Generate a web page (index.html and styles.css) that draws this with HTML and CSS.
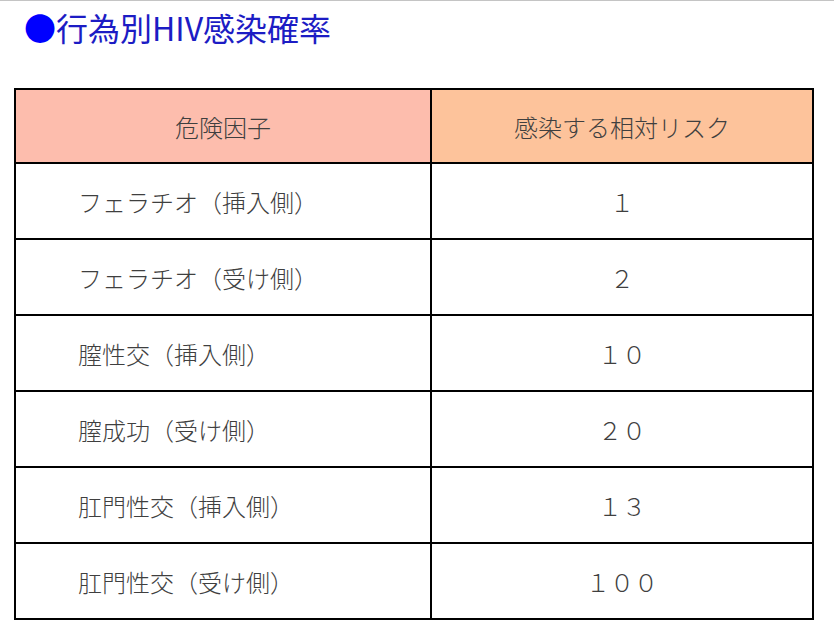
FILE: index.html
```html
<!DOCTYPE html>
<html lang="ja">
<head>
<meta charset="utf-8">
<link rel="stylesheet" href="styles.css">
</head>
<body>
<div class="page">
  <h2 class="title"><span class="dot">●</span>行為別HIV感染確率</h2>
  <table class="risk">
    <thead>
      <tr>
        <th class="h1">危険因子</th>
        <th class="h2">感染する相対リスク</th>
      </tr>
    </thead>
    <tbody>
      <tr><td class="factor">フェラチオ（挿入側）</td><td class="val">１</td></tr>
      <tr><td class="factor">フェラチオ（受け側）</td><td class="val">２</td></tr>
      <tr><td class="factor">膣性交（挿入側）</td><td class="val">１０</td></tr>
      <tr><td class="factor">膣成功（受け側）</td><td class="val">２０</td></tr>
      <tr><td class="factor">肛門性交（挿入側）</td><td class="val">１３</td></tr>
      <tr><td class="factor">肛門性交（受け側）</td><td class="val">１００</td></tr>
    </tbody>
  </table>
</div>
</body>
</html>
```

FILE: styles.css
```css
html, body {
  margin: 0;
  padding: 0;
  background: #ffffff;
}
.page {
  border-top: 1px solid #c4c4c4;
  font-family: "Noto Sans CJK JP", "Noto Sans", sans-serif;
  padding: 0 0 0 14px;
}
.title {
  margin: 0;
  padding: 6px 0 0 10px;
  height: 80px;
  box-sizing: border-box;
  font-size: 32px;
  font-weight: normal;
  line-height: 40px;
  color: #1c1cc4;
}
.dot {
  color: #0000ff;
}
.risk {
  border-collapse: collapse;
  width: 800px;
  margin-top: 7px;
  table-layout: fixed;
  font-size: 24px;
  font-weight: 300;
  color: #3f3f3f;
}
.risk th, .risk td {
  border: 2px solid #000000;
  height: 74px;
  padding: 0;
  font-weight: 300;
}
.risk th {
  text-align: center;
  height: 72px;
}
.h1 {
  width: 414px;
  background: #fdbdad;
}
.h2 {
  background: #fdc39b;
}
.factor {
  text-align: left;
  padding-left: 62px !important;
}
.val {
  text-align: center;
}
```
